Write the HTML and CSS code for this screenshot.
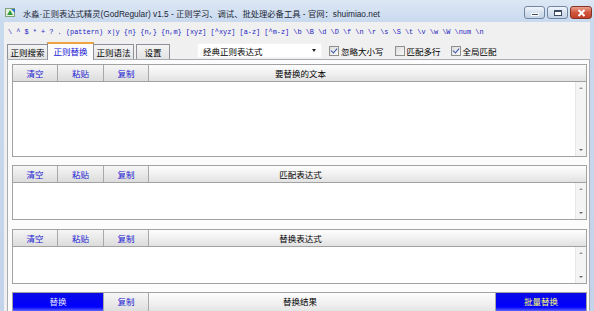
FILE: index.html
```html
<!DOCTYPE html>
<html lang="zh-CN">
<head>
    <meta charset="UTF-8">
    <title>水淼·正则表达式精灵</title>
    <link rel="stylesheet" href="styles.css">
</head>
<body>

<div class="window">
    <div class="titlebar">
        <svg class="app-icon" width="11" height="11" viewBox="0 0 11 11">
            <rect x="0.5" y="1.5" width="9" height="8" fill="#e8f1e0" stroke="#7da37a"/>
            <path d="M2 8 L5 3 L8 8 Z" fill="#2f9d3c"/>
            <path d="M6 2 L10 2 L10 6 Z" fill="#2e74c8"/>
        </svg>
        <span class="title">水淼·正则表达式精灵(GodRegular) v1.5 - 正则学习、调试、批处理必备工具 - 官网：shuimiao.net</span>
        <div class="controls">
            <div class="ctl"><span class="min-glyph"></span></div>
            <div class="ctl"><span class="max-glyph"></span></div>
            <div class="ctl close">
                <svg width="9" height="8" viewBox="0 0 9 8"><path d="M1.5 1 L7.5 7 M7.5 1 L1.5 7" stroke="#fff" stroke-width="2"/></svg>
            </div>
        </div>
    </div>

    <div class="client">
        <div class="syntax">\ ^ $ * + ? . (pattern) x|y {n} {n,} {n,m} [xyz] [^xyz] [a-z] [^m-z] \b \B \d \D \f \n \r \s \S \t \v \w \W \num \n</div>

        <div class="toolbar">
            <div class="tab t1">正则搜索</div>
            <div class="tab t2 active">正则替换</div>
            <div class="tab t3">正则语法</div>
            <div class="tab t4">设置</div>

            <div class="combo">
                <span>经典正则表达式</span>
                <span class="combo-arrow"></span>
            </div>

            <label class="check c1"><span class="box on"></span>忽略大小写</label>
            <label class="check c2"><span class="box"></span>匹配多行</label>
            <label class="check c3"><span class="box on"></span>全局匹配</label>
        </div>

        <div class="page">
            <div class="panel">
                <div class="head">
                    <div class="btn">清空</div>
                    <div class="btn">粘贴</div>
                    <div class="btn">复制</div>
                    <div class="caption">要替换的文本</div>
                </div>
                <div class="body big">
                    <div class="text"></div>
                    <div class="scroll"><span class="up"></span><span class="down"></span></div>
                </div>
            </div>

            <div class="panel">
                <div class="head">
                    <div class="btn">清空</div>
                    <div class="btn">粘贴</div>
                    <div class="btn">复制</div>
                    <div class="caption">匹配表达式</div>
                </div>
                <div class="body small">
                    <div class="text"></div>
                    <div class="scroll"><span class="up"></span><span class="down"></span></div>
                </div>
            </div>

            <div class="panel third">
                <div class="head">
                    <div class="btn">清空</div>
                    <div class="btn">粘贴</div>
                    <div class="btn">复制</div>
                    <div class="caption">替换表达式</div>
                </div>
                <div class="body small">
                    <div class="text"></div>
                    <div class="scroll"><span class="up"></span><span class="down"></span></div>
                </div>
            </div>

            <div class="panel result">
                <div class="head">
                    <div class="btn blue">替换</div>
                    <div class="btn">复制</div>
                    <div class="caption">替换结果</div>
                    <div class="btn blue batch">批量替换</div>
                </div>
            </div>
        </div>
    </div>
</div>

</body>
</html>
```

FILE: styles.css
```css
* {
    box-sizing: border-box;
}

body {
    margin: 0;
    width: 594px;
    height: 311px;
    overflow: hidden;
    font-family: "Noto Sans CJK SC", "Liberation Sans", sans-serif;
    font-size: 8.5px;
    color: #000;
    background-color: #c8d8ed;
}

.window {
    height: 311px;
    display: flex;
    flex-direction: column;
    padding: 0 4px;
    background: linear-gradient(#dde8f5, #c9d9ee 22px, #c3d4ea);
}

/* title bar */
.titlebar {
    height: 22px;
    flex-shrink: 0;
    display: flex;
    align-items: center;
}

.app-icon {
    margin-left: 1px;
    margin-top: 2px;
}

.title {
    margin-left: 7px;
    margin-top: 3px;
    font-family: "Liberation Sans", "Noto Sans CJK SC", sans-serif;
    font-size: 8.3px;
    color: #1b2636;
    white-space: nowrap;
}

.controls {
    margin-left: auto;
    margin-right: -2px;
    align-self: flex-start;
    margin-top: 6px;
    display: flex;
    gap: 2px;
}

.ctl {
    width: 21px;
    height: 13px;
    border: 1px solid #7186a3;
    border-radius: 3px;
    background: linear-gradient(#f2f6fb, #d6e1ef 50%, #c4d3e7);
    display: flex;
    align-items: center;
    justify-content: center;
}

.ctl.close {
    width: 22px;
    border-color: #843325;
    background: linear-gradient(#eaa08e, #d2573f 50%, #c0402a);
}

.min-glyph {
    width: 8px;
    height: 3px;
    margin-top: 4px;
    background: #3d4c63;
    border: 1px solid #fff;
}

.max-glyph {
    width: 8px;
    height: 6px;
    border: 1px solid #3d4c63;
    border-top-width: 2px;
    background: #fff;
}

/* client area */
.client {
    flex: 1;
    display: flex;
    flex-direction: column;
    padding-left: 3px;
    background-color: #f0f0f0;
    min-height: 0;
}

.syntax {
    height: 20px;
    flex-shrink: 0;
    padding-left: 1px;
    line-height: 20px;
    font-family: "Liberation Mono", monospace;
    font-size: 6.9px;
    color: #1d1dc4;
    white-space: nowrap;
}

.toolbar {
    height: 17px;
    flex-shrink: 0;
    display: flex;
    align-items: flex-end;
    position: relative;
    z-index: 1;
}

.tab {
    height: 15px;
    border: 1px solid #8d9098;
    border-bottom: none;
    background: linear-gradient(#f4f4f4, #e3e3e3);
    text-align: center;
    line-height: 14px;
    white-space: nowrap;
}

.t1 { width: 41px; }
.t2 { width: 47px; }
.t3 { width: 41px; margin-left: -1px; }
.t4 { width: 34px; margin-left: 2px; }

.tab.active {
    height: 18px;
    margin-bottom: -1px;
    margin-left: -1px;
    background: #fcfcfc;
    border-top: 2px solid #eda441;
    color: #1616d6;
    line-height: 15px;
}

.combo {
    width: 125px;
    height: 15px;
    margin-left: 27px;
    margin-bottom: 1px;
    background: #fff;
    border: 1px solid #f3f3f3;
    display: flex;
    align-items: center;
    padding-left: 5px;
}

.combo-arrow {
    margin-left: auto;
    margin-right: 5px;
    border-left: 2.5px solid transparent;
    border-right: 2.5px solid transparent;
    border-top: 3px solid #222;
}

.check {
    display: flex;
    align-items: center;
    gap: 2px;
    margin-bottom: 2px;
    white-space: nowrap;
}

.c1 { margin-left: 7px; }
.c2 { margin-left: 11px; }
.c3 { margin-left: 10px; }

.box {
    width: 10px;
    height: 10px;
    border: 1px solid #8f8f8f;
    background: linear-gradient(135deg, #dcdcdc, #fafafa);
    position: relative;
}

.box.on::after {
    content: '';
    position: absolute;
    left: 2px;
    top: 0px;
    width: 3px;
    height: 5px;
    border-right: 1.5px solid #3a52a8;
    border-bottom: 1.5px solid #3a52a8;
    transform: rotate(40deg);
}

/* tab page */
.page {
    flex: 1;
    min-height: 0;
    overflow: hidden;
    background-color: #fcfcfc;
    border: 1px solid #a9acb3;
    border-bottom: none;
    padding: 4px 2px 0 4px;
    display: flex;
    flex-direction: column;
    gap: 8px;
}

.panel {
    flex-shrink: 0;
    border: 1px solid #a2a2a2;
    background: #fff;
}

.panel.third {
    margin-top: 1px;
}

.head {
    height: 17px;
    display: grid;
    grid-template-columns: 45px 46px 45px 1fr;
    border-bottom: 1px solid #a2a2a2;
    background: linear-gradient(#fdfdfd, #f1f1f1 50%, #e2e2e2);
}

.btn {
    border-right: 1px solid #a8a8a8;
    text-align: center;
    line-height: 16px;
    color: #2222d2;
    background: linear-gradient(#f6f6f6, #e9e9e9 50%, #dcdcdc);
}

.caption {
    text-align: center;
    line-height: 16px;
    padding-right: 134px;
}

.body {
    display: flex;
}

.body.big { height: 74px; }
.body.small { height: 36px; }

.text {
    flex: 1;
}

.scroll {
    width: 11px;
    border-left: 1px solid #e6e6e6;
    background: #f4f4f4;
    display: flex;
    flex-direction: column;
    align-items: center;
    justify-content: space-between;
    padding: 5px 0 5px;
}

.up {
    border-left: 2px solid transparent;
    border-right: 2px solid transparent;
    border-bottom: 2px solid #9a9a9a;
}

.down {
    border-left: 2px solid transparent;
    border-right: 2px solid transparent;
    border-top: 2px solid #6a6a6a;
}

.result .head {
    height: 20px;
    border-bottom: none;
    grid-template-columns: 91px 45px 1fr 91px;
}

.result .caption {
    padding-right: 44px;
}

.btn.blue {
    color: #e6e6ff;
    background: linear-gradient(#0a0ae6, #0000ff 70%, #8f98ff);
}

.btn.batch {
    border-right: none;
    border-left: 1px solid #a8a8a8;
    color: #ffff70;
}
```
